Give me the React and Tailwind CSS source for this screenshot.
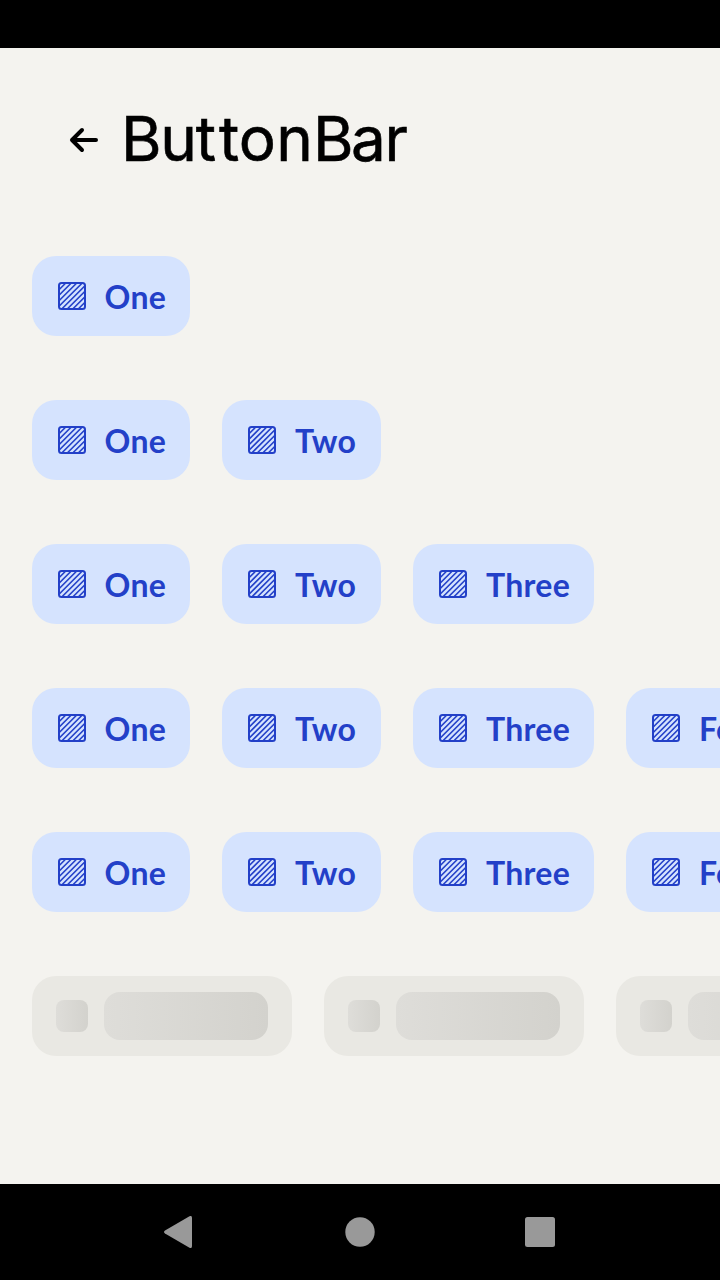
const labels = ["One", "Two", "Three", "Four"];

const textStyles = {
  One: "w-[62px] pl-[0.5px]",
  Two: "w-[63px] pl-px",
  Three: "w-[85px] pl-px",
  Four: "w-[72px] pl-px",
};

function HatchIcon() {
  return (
    <svg className="size-8 shrink-0" viewBox="0 0 32 32" fill="none" stroke="#2340c8" strokeWidth="2">
      <rect x="3" y="3" width="26" height="26" rx="2.5" />
      <path
        strokeWidth="1.65"
        d="M3 9.75 9.75 3M3 15.25 15.25 3M3 20.75 20.75 3M3 26.25 26.25 3M5.75 29 29 5.75M11.25 29 29 11.25M16.75 29 29 16.75M22.25 29 29 22.25"
      />
    </svg>
  );
}

function Chip({ label }) {
  return (
    <div className="mr-8 flex h-20 shrink-0 items-center gap-4 rounded-[24px] bg-[#d5e3fe] px-6">
      <HatchIcon />
      <span
        className={`whitespace-nowrap pt-0.5 text-[32px] leading-10 font-bold tracking-[0.3px] text-[#2340c8] ${textStyles[label]}`}
      >
        {label}
      </span>
    </div>
  );
}

function Skeleton() {
  return (
    <div className="flex h-20 w-[260px] shrink-0 items-center gap-4 rounded-[24px] bg-[#e9e8e3] px-6">
      <div className="size-8 rounded-lg bg-linear-to-r from-[#deddd9] to-[#d3d2cd]" />
      <div className="h-12 w-[164px] rounded-2xl bg-linear-to-r from-[#deddd9] to-[#d3d2cd]" />
    </div>
  );
}

export default function App() {
  return (
    <div className="flex h-[1280px] w-[720px] flex-col overflow-hidden bg-[#f4f3ef] font-['Lato',sans-serif]">
      <div className="h-12 shrink-0 bg-black" />
      <header className="flex h-[184px] shrink-0 items-center gap-[21px] pl-[68px]">
        <svg className="size-8 shrink-0" viewBox="0 0 32 32" fill="none" stroke="#000" strokeWidth="4" strokeLinecap="round" strokeLinejoin="round">
          <path d="M28 16H4M14 6 4 16l10 10" />
        </svg>
        <h1 className="pb-0.5 font-['Inter',sans-serif] text-[62px] leading-[80px] font-normal tracking-[-1.3px] text-black [-webkit-text-stroke:0.6px_black]">
          Bu<span className="tracking-[3px]">t</span><span className="tracking-[0.2px]">ton</span><span className="tracking-[-2.5px]">B</span>ar
        </h1>
      </header>
      <main className="flex grow flex-col gap-16 pt-6 pl-8">
        {[1, 2, 3, 4, 4].map((count, row) => (
          <div key={row} className="flex">
            {labels.slice(0, count).map((label) => (
              <Chip key={label} label={label} />
            ))}
          </div>
        ))}
        <div className="flex gap-8">
          <Skeleton />
          <Skeleton />
          <Skeleton />
        </div>
      </main>
      <nav className="flex h-24 shrink-0 items-center justify-center gap-[148px] bg-black">
        <svg className="size-8" viewBox="2 0 32 32" fill="#999">
          <path d="M3 14.6 27.5.3Q30-.8 30 2v28q0 2.8-2.5 1.7L3 17.4Q1 16 3 14.6Z" />
        </svg>
        <svg className="size-8" viewBox="0 0 32 32" fill="#999">
          <circle cx="16" cy="16" r="14.7" />
        </svg>
        <svg className="size-8" viewBox="0 0 32 32" fill="#999">
          <rect x="1" y="1" width="30" height="30" rx="2.5" />
        </svg>
      </nav>
    </div>
  );
}
